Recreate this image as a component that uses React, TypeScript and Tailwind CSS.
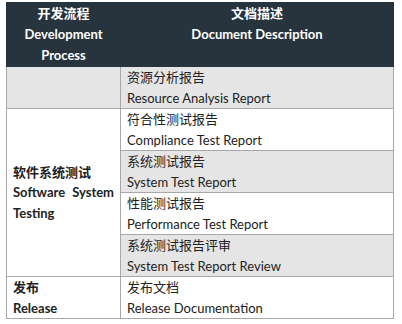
import React from "react";

type Row = {
  zh: string;
  en: string;
  shaded: boolean;
};

const rows: Row[] = [
  { zh: "符合性测试报告", en: "Compliance Test Report", shaded: false },
  { zh: "系统测试报告", en: "System Test Report", shaded: true },
  { zh: "性能测试报告", en: "Performance Test Report", shaded: false },
  { zh: "系统测试报告评审", en: "System Test Report Review", shaded: true },
];

const font = {
  fontFamily: 'Lato, "Noto Sans CJK SC", sans-serif',
};

const cell = "border border-[#a8a8a8] px-[6px] py-0 align-middle";

const DocCell = ({ zh, en, shaded }: Row) => (
  <td className={`${cell} ${shaded ? "bg-[#e5e5e5]" : "bg-white"}`}>
    <div>{zh}</div>
    <div>{en}</div>
  </td>
);

const App = () => {
  return (
    <div className="w-[402px] h-[324px] bg-white pt-[2px] pl-[6px]">
      <table
        className="border-collapse w-[388px] text-[13px] leading-[20.5px] text-[#222]"
        style={font}
      >
        <thead>
          <tr className="bg-[#27333d] text-white font-bold text-center leading-[21px]">
            <th className="w-[114px] border border-[#27333d] px-[6px] py-0 align-top">
              <div>开发流程</div>
              <div>Development</div>
              <div>Process</div>
            </th>
            <th className="border border-[#27333d] px-[6px] py-0 align-top">
              <div>文档描述</div>
              <div>Document Description</div>
            </th>
          </tr>
        </thead>
        <tbody>
          <tr>
            <td className={`${cell} bg-[#e5e5e5]`}></td>
            <DocCell zh="资源分析报告" en="Resource Analysis Report" shaded />
          </tr>
          {rows.map((r, i) => (
            <tr key={r.en}>
              {i === 0 && (
                <td rowSpan={4} className={`${cell} bg-white font-bold text-justify`}>
                  <div>软件系统测试</div>
                  <div className="[text-align-last:left]">Software System Testing</div>
                </td>
              )}
              <DocCell {...r} />
            </tr>
          ))}
          <tr>
            <td className={`${cell} bg-white font-bold`}>
              <div>发布</div>
              <div>Release</div>
            </td>
            <DocCell zh="发布文档" en="Release Documentation" shaded={false} />
          </tr>
        </tbody>
      </table>
    </div>
  );
};

export default App;
